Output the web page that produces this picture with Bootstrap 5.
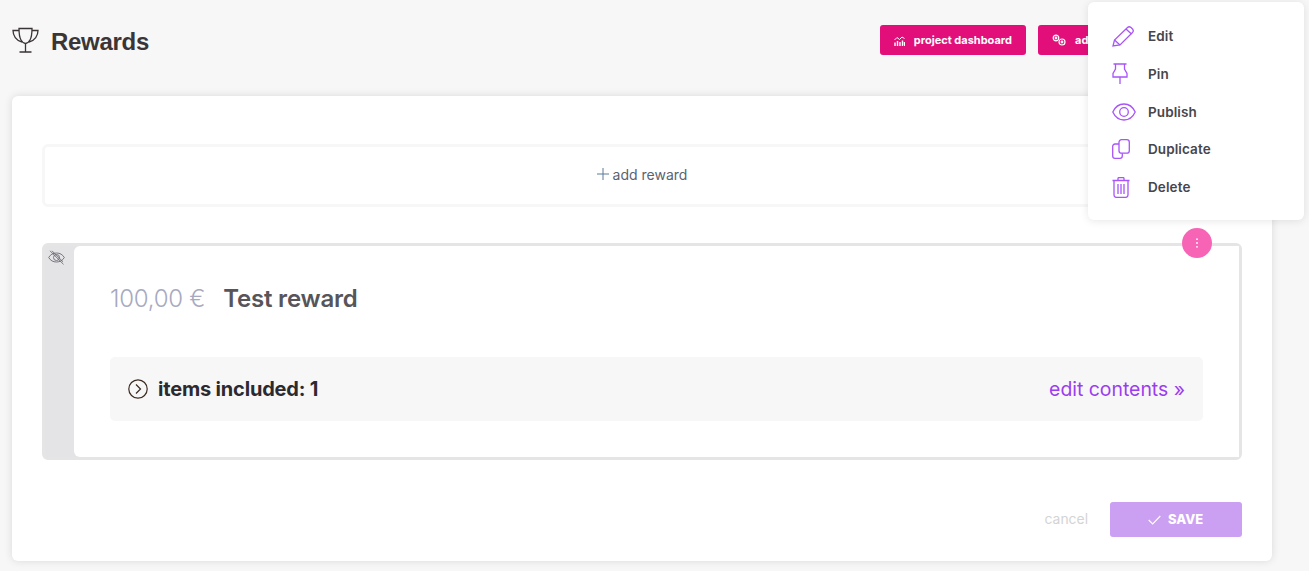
<!DOCTYPE html>
<html lang="en">
<head>
    <meta charset="UTF-8">
    <meta name="viewport" content="width=device-width, initial-scale=1, shrink-to-fit=no">
    <title>Rewards</title>
    <link href="https://cdn.jsdelivr.net/npm/bootstrap@5.3.2/dist/css/bootstrap.min.css" rel="stylesheet">
    <style>
        html, body { height: 100%; overflow: hidden; }
        body {
            font-family: Inter, "Liberation Sans", sans-serif;
            background-color: #f7f7f7;
            color: #3f3f46;
            position: relative;
        }
        .page-wrap { width: 1260px; margin-left: 12px; }
        .page-head { height: 96px; padding-bottom: 16px; }
        .page-title {
            font-family: "Liberation Sans", Arial, sans-serif;
            font-size: 24px; font-weight: 700; color: #3b3535;
            margin: 4px 0 0 12px; letter-spacing: -.3px;
        }
        .head-btn {
            background: #e20f7b; color: #fff; border: 0; border-radius: 3px;
            height: 30px; font-size: 11px; font-weight: 700;
            padding: 0 14px 0 14px; gap: 9px;
        }
        .head-btn:hover { background: #e20f7b; color: #fff; }
        .head-btn-wide { width: 234px; justify-content: flex-start; }
        .main-card {
            height: 465px; border: 0; border-radius: 6px;
            padding: 48px 30px 24px;
            box-shadow: 0 0 8px rgba(0,0,0,.12);
        }
        .add-box {
            height: 63px; border: 3px solid #f7f7f7; border-radius: 6px;
            font-size: 14px; color: #5b6270; margin-bottom: 36px; gap: 4px;
            padding-bottom: 3px;
        }
        .reward-box {
            height: 217px; border: 3px solid #e5e5e5; border-radius: 6px;
            background: #e4e4e7; position: relative;
        }
        .reward-side { width: 29px; padding: 2px 0 0 3px; line-height: 1; }
        .reward-body {
            background: #fff; border-radius: 6px 0 0 6px;
            padding: 37px 36px 0;
        }
        .price { font-size: 24px; color: #a7a9c0; letter-spacing: -.25px; margin-right: 18px; font-weight: 300; }
        .reward-name { font-size: 24px; font-weight: 600; color: #57555a; letter-spacing: -.2px; }
        .reward-line { line-height: 32px; margin-bottom: 42px; }
        .items-bar {
            height: 64px; background: #f7f7f7; border-radius: 5px;
            padding: 0 18px;
        }
        .items-label { font-size: 20px; font-weight: 700; color: #2c2a30; letter-spacing: -.18px; margin-left: 10px; }
        .edit-link { font-size: 19.4px; color: #9b3dee; text-decoration: none; padding-top: 2px; }
        .kebab {
            position: absolute; top: -18px; right: 27px;
            width: 30px; height: 30px; border-radius: 50%;
            background: #f764b5; border: 0; padding: 0;
        }
        .foot-row { margin-top: 42px; }
        .cancel-link { font-size: 13.9px; color: #d4d4d4; text-decoration: none; margin-right: 22px; }
        .save-btn {
            width: 132px; height: 35px; background: #cba0f2; border: 0; border-radius: 3px;
            color: #fff; font-size: 13px; font-weight: 800; gap: 7px; padding: 0 1px 0 0;
        }
        .save-btn:hover { background: #cba0f2; color: #fff; }
        .float-menu.dropdown-menu {
            position: absolute; top: 2px; left: 1088px; width: 216px; height: 218px;
            display: block; border: 0; border-radius: 6px; padding: 15.3px 0 0;
            box-shadow: 0 1px 8px rgba(0,0,0,.1); margin: 0;
        }
        .float-menu .dropdown-item {
            height: 37.75px; padding: 0 0 0 24px; gap: 0;
            font-size: 13.5px; font-weight: 600; color: #46464d; letter-spacing: .1px;
        }
        .menu-ico { width: 36px; flex: none; display: flex; }
    </style>
</head>
<body>

<div class="page-wrap">
    <div class="page-head d-flex align-items-center justify-content-between">
        <div class="d-flex align-items-center">
            <svg width="27" height="26" viewBox="0 0 27 26" fill="none" stroke="#3b3535" stroke-width="1.3">
                <path d="M7 1.5h13c0 6-.6 9-2 11.500s-2.800 3.500-4.500 3.500-3.100-1-4.500-3.500S7 7.500 7 1.500z"/>
                <path d="M7 3.500H1c0 5 3 10 9 11.500M20 3.500h6c0 5-3 10-9 11.500M13.500 17v8M7.500 25h12"/>
            </svg>
            <h1 class="page-title">Rewards</h1>
        </div>
        <div class="d-flex gap-2 head-actions">
            <button class="btn head-btn d-flex align-items-center me-1">
                <svg width="11" height="11" viewBox="0 0 11 11" fill="none" stroke="#fff" stroke-width="1">
                    <path d="M.5 5L3 2.500 5.500 4.500 8 2l2.500 1.500"/>
                    <path d="M1 11V7.500M3.500 11V6M6 11V7M8.500 11V5.500M10.500 11V7" stroke-width="1.400"/>
                </svg>
                project dashboard
            </button>
            <button class="btn head-btn head-btn-wide d-flex align-items-center">
                <svg width="14" height="12" viewBox="0 0 14 12" fill="none" stroke="#fff" stroke-width="1.200">
                    <circle cx="4" cy="4" r="2.800"/><circle cx="4" cy="4" r=".8"/>
                    <circle cx="10" cy="8" r="3"/><circle cx="10" cy="8" r=".8"/>
                </svg>
                admin
            </button>
        </div>
    </div>

    <div class="card main-card">
        <div class="add-box d-flex align-items-center justify-content-center">
            <svg width="12" height="12" viewBox="0 0 12 12" stroke="#5b7a99" stroke-width="1"><path d="M6 0v12M0 6h12"/></svg>
            add reward
        </div>

        <div class="reward-box d-flex">
            <div class="reward-side">
                <svg width="17" height="15" viewBox="0 0 17 15" fill="none" stroke="#6b6b72" stroke-width=".9">
                    <path d="M.7 7.500C2.500 4.500 5 3 8.500 3s6 1.500 7.800 4.500c-1.800 3-4.300 4.500-7.800 4.500S2.500 10.500.7 7.500z"/>
                    <circle cx="8.500" cy="7.500" r="3"/>
                    <path d="M2 .8l13.500 13.500M4 .8l11 11"/>
                </svg>
            </div>
            <div class="reward-body flex-grow-1">
                <div class="reward-line d-flex align-items-center">
                    <span class="price">100,00 €</span>
                    <span class="reward-name">Test reward</span>
                </div>
                <div class="items-bar d-flex align-items-center justify-content-between">
                    <div class="d-flex align-items-center">
                        <svg width="20" height="20" viewBox="0 0 20 20" fill="none" stroke="#3b2a20" stroke-width="1.200">
                            <circle cx="10" cy="10" r="9.200"/><path d="M8 5.500l4.500 4.500L8 14.500"/>
                        </svg>
                        <span class="items-label">items included: 1</span>
                    </div>
                    <a href="#" class="edit-link">edit contents »</a>
                </div>
            </div>
            <button class="kebab d-flex align-items-center justify-content-center" aria-label="Menu">
                <svg width="4" height="10" viewBox="0 0 4 10" fill="#fff"><circle cx="2" cy="1.200" r=".9"/><circle cx="2" cy="5" r=".9"/><circle cx="2" cy="8.800" r=".9"/></svg>
            </button>
        </div>

        <div class="foot-row d-flex align-items-center justify-content-end">
            <a href="#" class="cancel-link">cancel</a>
            <button class="btn save-btn d-flex align-items-center justify-content-center">
                <svg width="13" height="10" viewBox="0 0 13 10" fill="none" stroke="#fff" stroke-width="1.100"><path d="M.7 5l4 4L12.300 1"/></svg>
                SAVE
            </button>
        </div>
    </div>
</div>

<ul class="dropdown-menu float-menu list-unstyled">
    <li><a class="dropdown-item d-flex align-items-center" href="#">
        <span class="menu-ico"><svg width="22" height="21" viewBox="0 0 22 21" fill="none" stroke="#a855f7" stroke-width="1.300">
            <path d="M1 20l1.500-6L15.500 1.500c1-1 2.300-1 3.500 0l1.500 1.500c1 1.200 1 2.500 0 3.500L8 19z"/><path d="M2.500 14L8 19M14 3l5.500 5"/>
        </svg></span>Edit</a></li>
    <li><a class="dropdown-item d-flex align-items-center" href="#">
        <span class="menu-ico"><svg width="16" height="21" viewBox="0 0 16 21" fill="none" stroke="#a855f7" stroke-width="1.300">
            <path d="M1.500 1h13M3.500 1v5L1 10.500V14h14v-3.500L12.500 6V1M8 14v7"/>
        </svg></span>Pin</a></li>
    <li><a class="dropdown-item d-flex align-items-center" href="#">
        <span class="menu-ico"><svg width="24" height="18" viewBox="0 0 24 18" fill="none" stroke="#a855f7" stroke-width="1.300">
            <path d="M.8 9C3.200 3.800 7 1 12 1s8.800 2.800 11.200 8C20.800 14.200 17 17 12 17S3.200 14.200.8 9z"/><circle cx="12" cy="9" r="4.300"/>
        </svg></span>Publish</a></li>
    <li><a class="dropdown-item d-flex align-items-center" href="#">
        <span class="menu-ico"><svg width="18" height="20" viewBox="0 0 18 20" fill="none" stroke="#a855f7" stroke-width="1.300">
            <rect x="7" y=".7" width="10.300" height="13.500" rx="2.500"/><path d="M7 5H3C1.700 5 .7 6 .7 7.300V17c0 1.300 1 2.300 2.300 2.300h5c1.300 0 2.300-1 2.300-2.300v-2.800"/>
        </svg></span>Duplicate</a></li>
    <li><a class="dropdown-item d-flex align-items-center" href="#">
        <span class="menu-ico"><svg width="18" height="21" viewBox="0 0 18 21" fill="none" stroke="#a855f7" stroke-width="1.300">
            <path d="M.5 3.500h17M6 3.500V1.500c0-.5.4-.9.900-.9h4.200c.5 0 .9.400.9.900v2M2 3.500V18c0 1.500 1 2.400 2.400 2.400h9.200c1.400 0 2.400-.9 2.400-2.400V3.500M6 7v10M9 7v10M12 7v10"/>
        </svg></span>Delete</a></li>
</ul>

<script src="https://cdn.jsdelivr.net/npm/bootstrap@5.3.2/dist/js/bootstrap.bundle.min.js"></script>
</body>
</html>
